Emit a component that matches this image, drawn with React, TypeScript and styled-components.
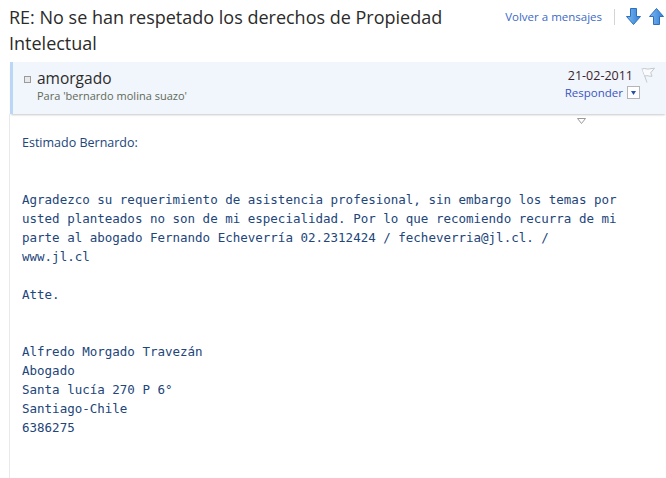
import * as React from 'react';
import styled, { createGlobalStyle } from 'styled-components';

const GlobalStyle = createGlobalStyle`
  html, body {
    margin: 0;
    padding: 0;
    background: #fff;
  }
  body {
    font-family: "Open Sans", "Noto Sans", sans-serif;
  }
`;

const Page = styled.div`
  width: 666px;
  height: 478px;
  overflow: hidden;
  display: flex;
  flex-direction: column;
`;

const TopBar = styled.div`
  display: flex;
  align-items: flex-start;
  padding-left: 9px;
`;

const Title = styled.h1`
  flex: 1;
  margin: 0;
  padding-top: 4px;
  font-weight: 400;
  font-size: 18px;
  line-height: 26px;
  color: #2b2b2b;
  max-width: 450px;
`;

const Nav = styled.div`
  display: flex;
  align-items: center;
  margin-left: auto;
  padding-top: 8px;
  padding-right: 2px;
`;

const NavLink = styled.a`
  font-size: 11.5px;
  color: #3b6ac6;
  text-decoration: none;
  cursor: pointer;
`;

const Divider = styled.span`
  width: 1px;
  height: 16px;
  background: #d4d4d4;
  margin: 0 11px 0 12px;
`;

const ArrowButton = styled.span<{ $gap?: number }>`
  display: inline-flex;
  margin-left: ${p => p.$gap ?? 0}px;
`;

const Header = styled.div`
  margin: 6px 0 0 10px;
  height: 52px;
  background: #f1f5fc;
  border-left: 3px solid #bcd6f5;
  box-shadow: 0 2px 2px -1px rgba(0, 0, 0, 0.22);
  display: flex;
  justify-content: space-between;
  position: relative;
`;

const Sender = styled.div`
  padding: 6px 0 0 11px;
`;

const SenderName = styled.div`
  display: flex;
  align-items: center;
  font-size: 15.5px;
  line-height: 20px;
  color: #2b2b2b;
`;

const Bullet = styled.span`
  width: 5px;
  height: 5px;
  border: 1px solid #9a9a9a;
  background: #e8e8e8;
  margin-right: 6px;
  margin-top: 2px;
`;

const Recipient = styled.div`
  font-size: 11px;
  line-height: 15px;
  color: #5f6a57;
  padding-left: 13px;
`;

const Meta = styled.div`
  display: flex;
  flex-direction: column;
  align-items: flex-end;
  padding: 6px 10px 0 0;
`;

const DateRow = styled.div`
  display: flex;
  align-items: center;
  font-size: 12.5px;
  line-height: 16px;
  color: #3a1f2b;
`;

const Flag = styled.span`
  display: inline-flex;
  margin-left: 7px;
  margin-top: -3px;
`;

const ReplyRow = styled.div`
  display: flex;
  align-items: center;
  margin-right: 16px;
  margin-top: 1px;
`;

const ReplyLink = styled.a`
  font-size: 11.5px;
  color: #3b55c0;
  cursor: pointer;
`;

const DropButton = styled.span`
  width: 11px;
  height: 11px;
  border: 1px solid #b5b5b5;
  background: #fff;
  margin-left: 4px;
  display: inline-flex;
  align-items: center;
  justify-content: center;
`;

const Body = styled.div`
  flex: 1;
  margin-left: 9px;
  border-left: 1px solid #e9e9e9;
  padding: 19px 0 0 12px;
  position: relative;
  color: #22457a;
`;

const Collapse = styled.span`
  position: absolute;
  top: 4px;
  left: 567px;
  display: inline-flex;
`;

const Greeting = styled.div`
  font-size: 12.5px;
  line-height: 19px;
  height: 19px;
  margin-bottom: 38px;
`;

const Mono = styled.pre`
  margin: 0;
  font-family: "DejaVu Sans Mono", "Liberation Mono", monospace;
  font-size: 12.5px;
  line-height: 19px;
  white-space: pre-wrap;
  color: #22457a;
`;

const DownArrow = () => (
  <svg width="15" height="17" viewBox="0 0 15 17">
    <defs>
      <linearGradient id="ga" x1="0" y1="0" x2="1" y2="0">
        <stop offset="0" stopColor="#7fb8ee" />
        <stop offset="1" stopColor="#2f7fd6" />
      </linearGradient>
    </defs>
    <path d="M4.5 0.5h6v8h4l-7 8l-7-8h4z" fill="url(#ga)" stroke="#2c6fc0" strokeWidth="1" />
  </svg>
);

const UpArrow = () => (
  <svg width="15" height="17" viewBox="0 0 15 17">
    <path d="M4.5 16.5h6v-8h4l-7-8l-7 8h4z" fill="url(#ga)" stroke="#2c6fc0" strokeWidth="1" />
  </svg>
);

const FlagIcon = () => (
  <svg width="16" height="16" viewBox="0 0 16 16">
    <path d="M2 1.5l5 14" stroke="#c4c8cc" strokeWidth="1" fill="none" />
    <path d="M2.2 2c3-1.5 5 1 7.5-0.2l4.8-0.6l-3.8 4.6l1.3 3.4c-2.6 0.6-4.6-1.4-7 -0.2" stroke="#c4c8cc" strokeWidth="1" fill="#fafbfd" strokeLinejoin="round" />
  </svg>
);

const TinyDown = ({ color }: { color: string }) => (
  <svg width="5" height="4" viewBox="0 0 5 4">
    <path d="M0 0h5l-2.5 4z" fill={color} />
  </svg>
);

const CollapseIcon = () => (
  <svg width="9" height="6" viewBox="0 0 9 6">
    <path d="M0.5 0.5h8l-4 5z" fill="#fff" stroke="#9a9a9a" strokeWidth="1" />
  </svg>
);

const message = `Agradezco su requerimiento de asistencia profesional, sin embargo los temas por
usted planteados no son de mi especialidad. Por lo que recomiendo recurra de mi
parte al abogado Fernando Echeverría 02.2312424 / fecheverria@jl.cl. /
www.jl.cl

Atte.


Alfredo Morgado Travezán
Abogado
Santa lucía 270 P 6°
Santiago-Chile
6386275`;

export default function App() {
  return (
    <Page>
      <GlobalStyle />
      <TopBar>
        <Title>RE: No se han respetado los derechos de Propiedad Intelectual</Title>
        <Nav>
          <NavLink>Volver a mensajes</NavLink>
          <Divider />
          <ArrowButton><DownArrow /></ArrowButton>
          <ArrowButton $gap={8}><UpArrow /></ArrowButton>
        </Nav>
      </TopBar>

      <Header>
        <Sender>
          <SenderName>
            <Bullet />
            amorgado
          </SenderName>
          <Recipient>Para 'bernardo molina suazo'</Recipient>
        </Sender>
        <Meta>
          <DateRow>
            21-02-2011
            <Flag><FlagIcon /></Flag>
          </DateRow>
          <ReplyRow>
            <ReplyLink>Responder</ReplyLink>
            <DropButton><TinyDown color="#2a4fa8" /></DropButton>
          </ReplyRow>
        </Meta>
      </Header>

      <Body>
        <Collapse><CollapseIcon /></Collapse>
        <Greeting>Estimado Bernardo:</Greeting>
        <Mono>{message}</Mono>
      </Body>
    </Page>
  );
}
